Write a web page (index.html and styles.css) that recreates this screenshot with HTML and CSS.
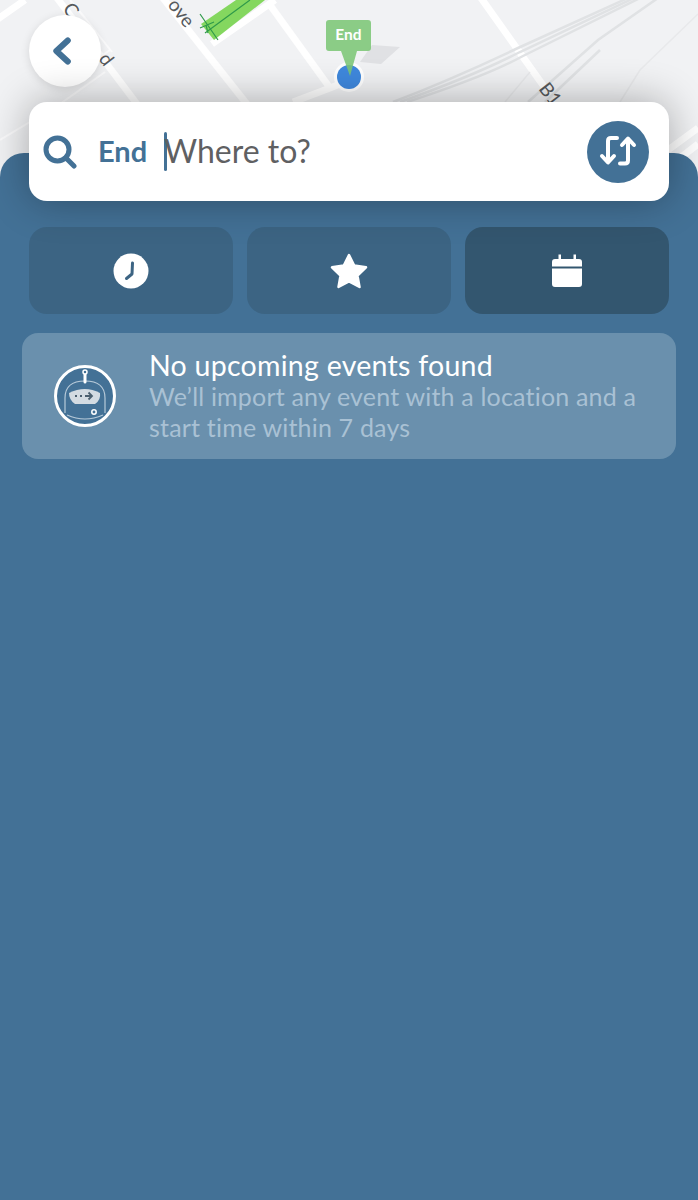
FILE: index.html
```html
<!DOCTYPE html>
<html lang="en">
<head>
<meta charset="utf-8">
<title>Where to?</title>
<link rel="stylesheet" href="styles.css">
</head>
<body>
<main class="screen">
  <svg class="map" viewBox="0 0 698 200" width="698" height="200" aria-hidden="true">
    <g class="road">
      <path d="M-5 21 L25 0"/>
      <path d="M57 -2 L140 108"/>
      <path d="M163 -2 L250 108"/>
      <path d="M270 5 L330 88"/>
      <path d="M212 44 L275 0"/>
      <path d="M293 102 L330 88 L350 80"/>
      <path d="M481 -2 L545 88"/>
      <path d="M668 150 L698 128"/>
      <path d="M680 158 L698 144"/>
    </g>
    <path class="road-thin" d="M60 85 L110 50 M0 140 L60 104 L105 72 M85 18 L112 52 M70 0 L85 18"/>
    <g class="rail">
      <path d="M393 102 C440 84 480 66 518 48 L628 -2"/>
      <path d="M400 102 C445 86 485 70 520 52 L634 -2"/>
      <path d="M407 102 C450 88 490 74 523 56 L640 -2"/>
      <path d="M528 102 L598 40 L658 -2"/>
      <path d="M545 102 L600 50"/>
    </g>
    <path class="rail-faint" d="M505 102 L530 72 M620 102 L640 70 L698 14"/>
    <path class="marker-shadow" d="M372 45 L400 47 L381 64 L360 62 Z"/>
    <path class="park" d="M201 24 L236 0 L265 0 L214 40 Z"/>
    <path class="park-line" d="M205 33 L250 0 M200 14 L218 40 M200 28 L214 22 M208 33 L206 25"/>
    <text class="map-label" transform="translate(62 9) rotate(52)">C</text>
    <text class="map-label" transform="translate(98 59) rotate(52)">d</text>
    <text class="map-label" transform="translate(167 5) rotate(52)">ove</text>
    <text class="map-label" transform="translate(538 89) rotate(52)">B1</text>
    <circle class="dot-ring" cx="349" cy="77" r="15"/>
    <circle class="dot" cx="349" cy="77" r="12"/>
    <path class="pin" d="M329 20 H368 Q371 20 371 23 V48 Q371 51 368 51 H357 L350 76 L341 51 H329 Q326 51 326 48 V23 Q326 20 329 20 Z"/>
    <text class="pin-label" x="348.500" y="40" text-anchor="middle">End</text>
  </svg>

  <button class="back" aria-label="Back">
    <svg viewBox="0 0 24 32" width="21" height="28"><path d="M18 4 L5 16 L18 28"/></svg>
  </button>

  <section class="search">
    <svg class="search-icon" viewBox="0 0 34 34" width="34" height="34"><circle cx="14.500" cy="14.500" r="11.500"/><path d="M23 23 L31 31"/></svg>
    <span class="search-tag">End</span>
    <span class="caret"></span>
    <span class="search-input">Where to?</span>
    <button class="swap" aria-label="Swap">
      <svg viewBox="0 0 62 62" width="62" height="62"><path d="M30 17 H24 Q21 17 21 20 V41 M15 35 L21 41.500 L27 35"/><path d="M33 42.500 H38 Q41 42.500 41 39.500 V18 M35 24 L41 17.500 L47 24"/></svg>
    </button>
  </section>

  <section class="panel">
    <div class="tabs">
      <button class="tab" aria-label="Recent">
        <svg viewBox="0 0 36 36" width="36" height="36"><circle class="fill" cx="18" cy="18" r="17.500"/><path class="hand" d="M19.500 10 L19 21 L13.500 25.500"/></svg>
      </button>
      <button class="tab" aria-label="Favourites">
        <svg viewBox="0 0 38 36" width="38" height="36"><path class="fill star" d="M19 2 L24.200 12.600 L36 14.300 L27.500 22.600 L29.500 34 L19 28.500 L8.500 34 L10.500 22.600 L2 14.300 L13.800 12.600 Z"/></svg>
      </button>
      <button class="tab tab-active" aria-label="Calendar">
        <svg viewBox="0 0 30 33" width="30" height="33"><path class="fill" d="M6.500 0.500 H9 V5 H21.500 V0.500 H24 V5 H27 Q30 5 30 8 V12.500 H0 V8 Q0 5 3 5 H6.500 Z M0 14.500 H30 V30 Q30 33 27 33 H3 Q0 33 0 30 Z"/></svg>
      </button>
    </div>

    <article class="notice">
      <svg class="robot" viewBox="0 0 62 62" width="62" height="62">
        <circle class="robot-ring" cx="31" cy="31" r="29.500"/>
        <path class="robot-line" d="M11 48 V33 Q11 16 31 16 Q51 16 51 33 V48"/>
        <path class="robot-line" d="M13 50 Q31 58 49 50"/>
        <path class="robot-visor" d="M15 28 Q31 20 46 28 Q47 35 41 39 H21 Q15 35 15 28 Z"/>
        <path class="robot-dots" d="M21 31 H32"/>
        <path class="robot-arrow" d="M32 31 H38 M34.500 27.500 L38 31 L34.500 34.500"/>
        <path class="robot-antenna" d="M31 8 V17"/>
        <circle class="robot-bolt" cx="31" cy="7" r="2"/>
        <circle class="robot-bolt-ring" cx="40" cy="47" r="2.200"/>
      </svg>
      <div class="notice-text">
        <h2 class="notice-title">No upcoming events found</h2>
        <p class="notice-body">We’ll import any event with a location and a start time within 7 days</p>
      </div>
    </article>
  </section>
</main>
</body>
</html>
```
FILE: styles.css
```css
* { box-sizing: border-box; }
html, body { margin: 0; padding: 0; }
body { background: #437196; font-family: "Lato", "Open Sans", sans-serif; overflow: hidden; }
button { border: 0; padding: 0; font: inherit; }

.screen {
  position: relative;
  width: 698px;
  height: 1200px;
  padding-top: 15px;
  display: flex;
  flex-direction: column;
  background: #f1f2f4;
  overflow: hidden;
}

.map { position: absolute; left: 0; top: 0; }
.road path { fill: none; stroke: #fff; stroke-width: 7; }
.road-thin { fill: none; stroke: #fafafb; stroke-width: 2; }
.rail path { fill: none; stroke: #e0e2e4; stroke-width: 2.500; }
.rail-faint { fill: none; stroke: #e8e9eb; stroke-width: 1.500; }
.marker-shadow { fill: #e0e1e4; }
.park { fill: #84d75f; }
.park-line { fill: none; stroke: #2f9a4a; stroke-width: 1.200; }
.map-label { font: 19px "Lato", sans-serif; fill: #56595c; }
.dot-ring { fill: #fff; }
.dot { fill: #3f88dd; }
.pin { fill: #7cc676; opacity: .88; }
.pin-label { font: 700 15.500px "Lato", sans-serif; fill: #fff; }

.back {
  position: relative;
  z-index: 2;
  width: 72px;
  height: 72px;
  margin-left: 29px;
  border-radius: 50%;
  background: #fff;
  display: flex;
  align-items: center;
  justify-content: center;
  box-shadow: 0 2px 10px rgba(0, 0, 0, .12);
}
.back svg { fill: none; stroke: #437196; stroke-width: 7; stroke-linecap: round; stroke-linejoin: round; margin-right: 6px; }

.search {
  position: relative;
  z-index: 2;
  width: 640px;
  height: 99px;
  margin: 15px 0 0 29px;
  padding: 0 20px 0 14px;
  display: flex;
  align-items: center;
  background: #fff;
  border-radius: 18px;
  box-shadow: 0 0 42px rgba(0, 0, 0, .32);
}
.search-icon { fill: none; stroke: #437196; stroke-width: 5; stroke-linecap: round; flex: none; }
.search-tag { margin: -2px 0 0 21px; width: 66px; font-size: 29px; font-weight: 700; color: #437196; }
.caret { width: 3px; height: 39px; margin-top: -1px; background: #437196; border-radius: 2px; flex: none; }
.search-input { margin: -3px 0 0 -3px; flex: 1; font-size: 32px; color: #5f6062; }
.swap { width: 62px; height: 62px; border-radius: 50%; background: #437196; flex: none; }
.swap svg { display: block; fill: none; stroke: #fff; stroke-width: 4; stroke-linecap: round; stroke-linejoin: round; }

.panel {
  position: relative;
  z-index: 1;
  flex: 1;
  margin-top: -48px;
  padding: 74px 22px 0;
  background: #437196;
  border-radius: 24px 24px 0 0;
}
.tabs { display: flex; gap: 14px; margin: 0 7px; }
.tab {
  flex: 1;
  height: 87px;
  background: #3c6483;
  border-radius: 18px;
  display: flex;
  align-items: center;
  justify-content: center;
}
.tab-active { background: #33566f; }
.tab .fill { fill: #fff; }
.tab .star { stroke: #fff; stroke-width: 2.500; stroke-linejoin: round; }
.tab .hand { fill: none; stroke: #3c6483; stroke-width: 3; stroke-linecap: round; stroke-linejoin: round; }

.notice {
  margin-top: 19px;
  height: 126px;
  padding-left: 32px;
  display: flex;
  align-items: center;
  gap: 33px;
  background: #6a90ad;
  border-radius: 16px;
}
.robot { flex: none; }
.robot-ring { fill: #437196; stroke: #fff; stroke-width: 3; }
.robot-line { fill: none; stroke: #b7cad9; stroke-width: 1.200; }
.robot-visor { fill: #d3dbe2; }
.robot-dots { fill: none; stroke: #4b5f6f; stroke-width: 1.800; stroke-dasharray: 2 3; }
.robot-arrow { fill: none; stroke: #4b5f6f; stroke-width: 1.800; }
.robot-antenna { fill: none; stroke: #fff; stroke-width: 3; stroke-linecap: round; }
.robot-bolt { fill: #437196; stroke: #fff; stroke-width: 1.500; }
.robot-bolt-ring { fill: #437196; stroke: #fff; stroke-width: 1.500; }
.notice-text { flex: 1; }
.notice-title { margin: 0; font-size: 28.500px; font-weight: 400; letter-spacing: .27px; line-height: 32px; color: #fff; }
.notice-body { margin: 0; padding-right: 30px; font-size: 25px; letter-spacing: .19px; line-height: 31px; color: #a9c1d4; }
```
